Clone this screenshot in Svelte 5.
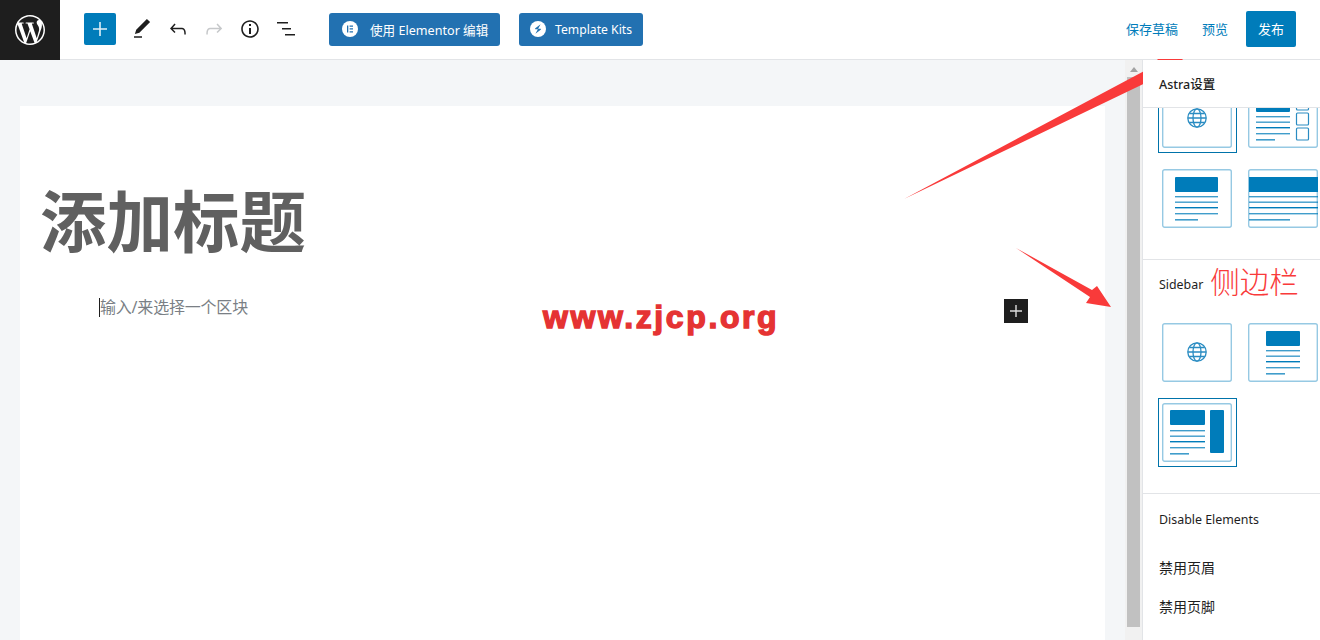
<script>
  const tilesA = ['globe', 'checklist', 'content', 'full'];
  const tilesB = ['globe', 'narrow', 'right'];
</script>

{#snippet lines(x, w, short)}
  <rect {x} y="27" width={w} height="1.4" opacity=".75" />
  <rect {x} y="32.5" width={w} height="1.4" opacity=".75" />
  <rect {x} y="38" width={w} height="1.4" />
  <rect {x} y="44" width={w} height="1.4" opacity=".75" />
  <rect {x} y="50" width={short} height="1.6" opacity=".75" />
{/snippet}

{#snippet tile(kind, selected)}
  <div class="tile" class:selected>
    <svg width="70" height="59" viewBox="0 0 70 59" fill="#007cba">
      <rect x="0.7" y="0.7" width="68.6" height="57.6" rx="2" fill="#fff" stroke="#96c9e3" stroke-width="1.4" />
      {#if kind === 'globe'}
        <g fill="none" stroke="#2a8cc2" stroke-width="1.3">
          <circle cx="35" cy="29" r="9.2" />
          <ellipse cx="35" cy="29" rx="4" ry="9.2" />
          <path d="M26 29h18M27.5 24.5h15M27.5 33.5h15" />
        </g>
      {:else if kind === 'content'}
        <rect x="13" y="8" width="43" height="15" rx="1" />
        {@render lines(13, 43, 23)}
      {:else if kind === 'narrow'}
        <rect x="18" y="8" width="34" height="15" rx="1" />
        {@render lines(18, 34, 19)}
      {:else if kind === 'full'}
        <rect x="1" y="8" width="69" height="15" />
        {@render lines(1, 69, 41)}
      {:else if kind === 'right'}
        <rect x="8" y="7" width="35" height="15" rx="1" />
        <rect x="48" y="7" width="14" height="43" rx="1" />
        {@render lines(8, 35, 19)}
      {:else if kind === 'checklist'}
        <rect x="8" y="8" width="34" height="15" rx="1" />
        {@render lines(8, 34, 19)}
        <g fill="none" stroke="#2a8cc2" stroke-width="1.2">
          <rect x="48.5" y="9" width="12" height="12" rx="1" />
          <rect x="48.5" y="24" width="12" height="12" rx="1" />
          <rect x="48.5" y="39" width="12" height="12" rx="1" />
        </g>
      {/if}
    </svg>
  </div>
{/snippet}

<div class="screen">
  <header>
    <div class="logo">
      <svg width="30" height="30" viewBox="0 0 24 24" fill="#fff"><path d="M21.469 6.825c.84 1.537 1.318 3.3 1.318 5.175 0 3.979-2.156 7.456-5.363 9.325l3.295-9.527c.615-1.54.82-2.771.82-3.864 0-.405-.026-.78-.07-1.11m-7.981.105c.647-.03 1.232-.105 1.232-.105.582-.075.514-.93-.067-.899 0 0-1.755.135-2.88.135-1.064 0-2.85-.15-2.85-.15-.585-.03-.661.855-.075.885 0 0 .54.061 1.125.09l1.68 4.605-2.37 7.08L5.354 6.9c.649-.03 1.234-.1 1.234-.1.585-.075.516-.93-.065-.896 0 0-1.746.138-2.874.138-.2 0-.438-.008-.69-.015C4.911 3.15 8.235 1.215 12 1.215c2.809 0 5.365 1.072 7.286 2.833-.046-.003-.091-.009-.141-.009-1.06 0-1.812.923-1.812 1.914 0 .89.513 1.643 1.06 2.531.411.72.89 1.643.89 2.977 0 .915-.354 1.994-.821 3.479l-1.075 3.585-3.9-11.61.001.014zM12 22.784c-1.059 0-2.081-.153-3.048-.437l3.237-9.406 3.315 9.087c.024.053.05.101.078.149-1.12.393-2.325.609-3.582.609M1.211 12c0-1.564.336-3.05.935-4.39L7.29 21.709C3.694 19.96 1.212 16.271 1.211 12M12 0C5.385 0 0 5.385 0 12s5.385 12 12 12 12-5.385 12-12S18.615 0 12 0" /></svg>
    </div>

    <div class="tools">
      <button class="add" aria-label="add">
        <svg width="14" height="14" viewBox="0 0 14 14" fill="#dff0f8"><path d="M6.2 0h1.6v6.2H14v1.6H7.8V14H6.2V7.8H0V6.2h6.2z" /></svg>
      </button>
      <svg class="tool" width="24" height="24" viewBox="0 0 24 24"><path d="M20.1 5.1L16.9 2 6.2 12.7l-1.3 4.4 4.5-1.3L20.1 5.1zM4 20.8h8v-1.5H4v1.5z" /></svg>
      <svg class="tool" width="24" height="24" viewBox="0 0 24 24"><path d="M18.3 11.7c-.6-.6-1.4-.9-2.3-.9H6.7l2.9-3.3-1.1-1-4.5 5L8.5 16l1-1-2.7-2.7H16c.5 0 .9.2 1.3.5 1 1 1 3.4 1 4.5v.3h1.5v-.2c0-1.5 0-4.3-1.5-5.7z" /></svg>
      <svg class="tool off" width="24" height="24" viewBox="0 0 24 24"><path d="M15.6 6.5l-1.1 1 2.9 3.3H8c-.9 0-1.7.3-2.3.9-1.4 1.5-1.4 4.2-1.4 5.6v.2h1.5v-.3c0-1.1 0-3.5 1-4.5.3-.3.7-.5 1.3-.5h9.2L14.5 15l1.1 1.1 4.6-4.6-4.6-5z" /></svg>
      <svg class="tool" width="24" height="24" viewBox="0 0 24 24"><path d="M12 3.2c-4.8 0-8.8 3.9-8.8 8.8 0 4.8 3.9 8.8 8.8 8.8 4.8 0 8.8-3.9 8.8-8.8 0-4.8-4-8.8-8.8-8.8zm0 16c-4 0-7.2-3.3-7.2-7.2C4.8 8 8 4.8 12 4.8s7.2 3.3 7.2 7.2c0 4-3.2 7.2-7.2 7.2zM11 17h2v-6h-2v6zm0-8h2V7h-2v2z" /></svg>
      <svg class="tool" width="24" height="24" viewBox="0 0 24 24"><path d="M3 5h11v1.5H3zM8 11h9v1.5H8zM11 17h10v1.5H11z" /></svg>
    </div>

    <div class="plugins">
      <button class="plugin elementor">
        <svg width="16" height="16" viewBox="0 0 16 16"><circle cx="8" cy="8" r="8" fill="#fff" /><path d="M5 4.5h1.3v7H5zM7.6 4.5H11v1.3H7.6zM7.6 7.3H11v1.3H7.6zM7.6 10.2H11v1.3H7.6z" fill="#2271b1" /></svg>
        <span>使用 Elementor 编辑</span>
      </button>
      <button class="plugin kits">
        <svg width="16" height="16" viewBox="0 0 16 16"><circle cx="8" cy="8" r="8" fill="#fff" /><path d="M10.6 3.2 5.3 7.3c-.4.4-.2 1 .4 1h2.2l-2.5 4.5 5.3-4.1c.4-.4.2-1-.4-1H8.100z" fill="#2271b1" /></svg>
        <span>Template Kits</span>
      </button>
    </div>

    <div class="actions">
      <span class="link">保存草稿</span>
      <span class="link">预览</span>
      <button class="publish">发布</button>
    </div>
  </header>

  <div class="body">
    <main>
      <div class="page">
        <h1>添加标题</h1>
        <div class="block">
          <p class="placeholder">输入/来选择一个区块</p>
          <button class="inline-add" aria-label="add block">
            <svg width="12" height="12" viewBox="0 0 12 12" fill="#ddd"><path d="M5.3 0h1.4v5.3H12v1.4H6.7V12H5.3V6.7H0V5.300h5.3z" /></svg>
          </button>
        </div>
      </div>
    </main>

    <div class="scrollbar">
      <div class="up"></div>
      <div class="thumb"></div>
    </div>

    <aside>
      <div class="side-head">Astra设置</div>
      <div class="side-scroll">
        <section class="first">
          <div class="grid">
            {#each tilesA as kind, i}
              {@render tile(kind, i === 0)}
            {/each}
          </div>
        </section>
        <section class="second">
          <div class="label-row">
            <span class="label">Sidebar</span>
            <span class="note">侧边栏</span>
          </div>
          <div class="grid">
            {#each tilesB as kind, i}
              {@render tile(kind, i === 2)}
            {/each}
          </div>
        </section>
        <section class="third">
          <div class="label">Disable Elements</div>
          <div class="opt">禁用页眉</div>
          <div class="opt">禁用页脚</div>
        </section>
      </div>
    </aside>
  </div>

  <!-- annotations pasted on top of the screenshot -->
  <svg class="marks" width="1320" height="640" viewBox="0 0 1320 640" fill="#f93a3a">
    <path d="M904 199 1148 69 1158 59H1183L1166 78 1160 76z" />
    <path d="M1016 248 1092 290 1097 286 1111 307 1086 303 1090 297z" />
  </svg>
  <div class="stamp">www.zjcp.org</div>
</div>

<style>
  :global(body) {
    margin: 0;
    background: #fff;
  }

  .screen {
    position: relative;
    width: 1320px;
    height: 640px;
    overflow: hidden;
    font-family: "Noto Sans", "Noto Sans CJK SC", sans-serif;
    font-size: 13px;
    color: #1e1e1e;
  }

  button {
    border: 0;
    padding: 0;
    font: inherit;
    color: #fff;
    display: flex;
    align-items: center;
    justify-content: center;
  }

  header {
    height: 60px;
    box-sizing: border-box;
    border-bottom: 1px solid #e2e4e7;
    display: flex;
    align-items: flex-start;
  }

  .logo {
    width: 60px;
    height: 60px;
    flex: none;
    background: #1e1e1e;
    display: flex;
    align-items: center;
    justify-content: center;
  }

  .tools {
    margin-left: 24px;
    height: 58px;
    display: flex;
    align-items: center;
    gap: 12px;
  }

  .add {
    width: 32px;
    height: 32px;
    background: #007cba;
    border-radius: 2px;
    margin-right: 2px;
  }

  .tool {
    fill: #1e1e1e;
  }

  .tool.off {
    fill: #c6c8ca;
  }

  .plugins {
    margin-left: 31px;
    margin-top: 13px;
    display: flex;
    gap: 19px;
  }

  .plugin {
    height: 33px;
    padding-bottom: 1px;
    box-sizing: border-box;
    background: #2271b1;
    border-radius: 3px;
    justify-content: flex-start;
    white-space: nowrap;
  }

  .elementor {
    width: 171px;
    padding-left: 13px;
    gap: 12px;
    font-size: 12.6px;
  }

  .kits {
    width: 124px;
    padding-left: 11px;
    gap: 9px;
    font-size: 12.2px;
  }

  .actions {
    margin-left: auto;
    margin-right: 24px;
    margin-top: 11px;
    display: flex;
    align-items: center;
    gap: 24px;
  }

  .link {
    color: #007cba;
    margin-top: -2px;
  }

  .publish {
    width: 50px;
    height: 36px;
    padding-bottom: 2px;
    box-sizing: border-box;
    margin-left: -6px;
    background: #007cba;
    border-radius: 2px;
  }

  .body {
    height: 580px;
    display: flex;
  }

  main {
    width: 1125px;
    flex: none;
    box-sizing: border-box;
    padding: 46px 20px 0;
    background: #f4f6f8;
  }

  .page {
    height: 100%;
    background: #fff;
    padding: 0 20px;
  }

  h1 {
    margin: 0;
    padding-top: 70px;
    font-size: 66.500px;
    line-height: 90px;
    font-weight: 700;
    color: #606060;
  }

  .block {
    margin-top: 32px;
    margin-left: 59px;
    width: 929px;
    display: flex;
    align-items: flex-start;
    justify-content: space-between;
  }

  .placeholder {
    margin: 0;
    box-sizing: border-box;
    height: 19px;
    border-left: 1px solid #1e1e1e;
    font-size: 16px;
    line-height: 19px;
    letter-spacing: -0.2px;
    color: #7a7f85;
  }

  .inline-add {
    width: 24px;
    height: 24px;
    margin-top: 1px;
    background: #1e1e1e;
  }

  .scrollbar {
    width: 17px;
    flex: none;
    box-sizing: border-box;
    background: #f1f1f1;
    padding: 0 2px 0 2px;
  }

  .up {
    width: 0;
    height: 0;
    margin: 7px auto 5px;
    border: 4px solid transparent;
    border-top: 0;
    border-bottom: 5px solid #a3a3a3;
  }

  .thumb {
    width: 13px;
    height: 550px;
    background: #c1c1c1;
  }

  aside {
    flex: 1;
    box-sizing: border-box;
    border-left: 1px solid #e2e4e7;
    display: flex;
    flex-direction: column;
    min-width: 0;
  }

  .side-head {
    height: 48px;
    flex: none;
    box-sizing: border-box;
    border-bottom: 1px solid #e2e4e7;
    padding: 15px 0 0 16px;
    font-size: 12.5px;
    line-height: 20px;
    font-weight: 500;
    position: relative;
    z-index: 1;
    background: #fff;
  }

  .side-scroll {
    flex: 1;
    overflow: hidden;
  }

  section {
    border-bottom: 1px solid #e2e4e7;
    padding-left: 19px;
  }

  .first {
    margin-top: -19px;
    padding-bottom: 31px;
  }

  .grid {
    display: grid;
    grid-template-columns: 70px 70px;
    column-gap: 16px;
    row-gap: 21px;
  }

  .tile {
    position: relative;
    height: 59px;
  }

  .tile svg {
    display: block;
  }

  .tile.selected::after {
    content: "";
    position: absolute;
    inset: -5px -5px -5px -4px;
    border: 1px solid #0073aa;
  }

  .second {
    padding-bottom: 31px;
  }

  .label-row {
    height: 63px;
    margin-left: -3px;
    display: flex;
    align-items: flex-start;
    gap: 7px;
  }

  .label {
    font-size: 12.4px;
    line-height: 18px;
  }

  .label-row .label {
    margin-top: 16px;
  }

  .note {
    font-size: 29.500px;
    line-height: 40px;
    margin-top: 2px;
    color: #f93a3a;
    font-weight: 300;
  }

  .third {
    border: 0;
    padding: 17px 0 0 16px;
  }

  .opt {
    margin-top: 19px;
    font-size: 14px;
    line-height: 20px;
  }

  .third .label + .opt {
    margin-top: 29px;
  }

  .marks {
    position: absolute;
    inset: 0;
    pointer-events: none;
  }

  .stamp {
    position: absolute;
    left: 543px;
    top: 297px;
    font-family: "Liberation Sans", sans-serif;
    font-size: 32px;
    line-height: 40px;
    font-weight: 700;
    letter-spacing: 2.6px;
    color: #e53333;
    -webkit-text-stroke: 1.4px #e53333;
  }
</style>
